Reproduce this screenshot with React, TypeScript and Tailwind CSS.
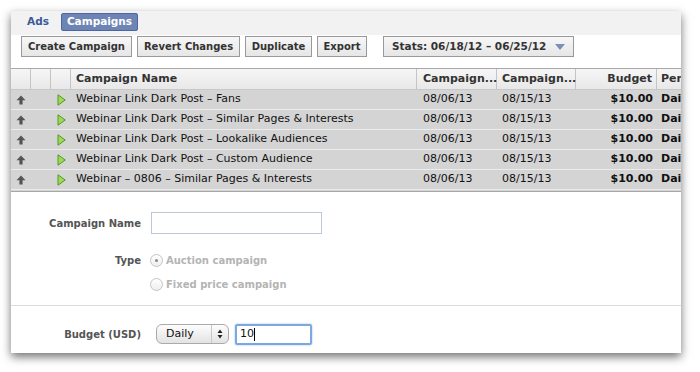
import React from 'react';

const rows = [
    'Webinar Link Dark Post – Fans',
    'Webinar Link Dark Post – Similar Pages & Interests',
    'Webinar Link Dark Post – Lookalike Audiences',
    'Webinar Link Dark Post – Custom Audience',
    'Webinar – 0806 – Similar Pages & Interests',
];

const UpArrow = () => (
    <svg width="10" height="10" viewBox="0 0 10 10">
        <path d="M5 0.5 L9.5 5.2 L6.6 5.2 L6.6 9.5 L3.4 9.5 L3.4 5.2 L0.5 5.2 Z" fill="#555" />
    </svg>
);

const PlayIcon = () => (
    <svg width="9" height="12" viewBox="0 0 9 12">
        <path d="M1 0.8 L8.2 6 L1 11.2 Z" fill="#9fd85a" stroke="#4e9a1e" strokeWidth="1" strokeLinejoin="round" />
    </svg>
);

const ToolButton: React.FC<{ children: React.ReactNode; className?: string }> = ({ children, className }) => (
    <button className={`h-[21px] px-[7px] border border-[#999] bg-gradient-to-b from-[#f7f7f7] to-[#e6e6e6] text-[10px] font-bold text-[#333] leading-none flex items-center whitespace-nowrap ${className ?? ''}`}>
        {children}
    </button>
);

const App: React.FC = () => {
    const cols = 'grid grid-cols-[20px_20px_20px_346px_80px_79px_81px_24px]';
    return (
        <div className="w-[700px] h-[372px] bg-white overflow-hidden font-['Lucida_Grande','DejaVu_Sans',sans-serif]">
            <div className="ml-[11px] mt-[11px] w-[670px] h-[342px] bg-white shadow-[0_4px_9px_rgba(0,0,0,0.55)] flex flex-col">
                {/* tabs */}
                <div className="h-[24px] bg-[#f2f2f2] flex items-start pt-[2px] pl-[16px]">
                    <span className="text-[10.5px] font-bold text-[#3b5998] h-[18px] flex items-center">Ads</span>
                    <span className="ml-[12px] h-[18px] px-[5px] flex items-center bg-[#6d84b4] border border-[#4b67a1] rounded-[2px] text-[10.5px] font-bold text-white">Campaigns</span>
                </div>
                {/* toolbar */}
                <div className="h-[33px] flex items-start pt-[1px] pl-[10px] gap-[5px]">
                    <ToolButton className="w-[111px] justify-center">Create Campaign</ToolButton>
                    <ToolButton className="w-[103px] justify-center">Revert Changes</ToolButton>
                    <ToolButton className="w-[67px] justify-center">Duplicate</ToolButton>
                    <ToolButton className="w-[50px] justify-center">Export</ToolButton>
                    <ToolButton className="ml-[11px] w-[191px] justify-between px-[8px]">
                        <span className="text-[10.5px]">Stats: 06/18/12 – 06/25/12</span>
                        <svg width="10" height="6" viewBox="0 0 10 6">
                            <path d="M0 0 L10 0 L5 6 Z" fill="#7d8fb8" />
                        </svg>
                    </ToolButton>
                </div>
                {/* table */}
                <div className="border-t border-[#a8a8a8]">
                    <div className={`${cols} h-[21px] bg-gradient-to-b from-[#f6f6f6] to-[#e8e8e8] border-b border-[#c8c8c8] text-[11px] font-bold text-[#333]`}>
                        <div className="border-r border-[#c4c4c4]" />
                        <div className="border-r border-[#c4c4c4]" />
                        <div className="border-r border-[#c4c4c4]" />
                        <div className="border-r border-[#c4c4c4] pl-[5px] flex items-center">Campaign Name</div>
                        <div className="border-r border-[#c4c4c4] pl-[6px] flex items-center">Campaign...</div>
                        <div className="border-r border-[#c4c4c4] pl-[5px] flex items-center">Campaign...</div>
                        <div className="border-r border-[#c4c4c4] pr-[4px] flex items-center justify-end">Budget</div>
                        <div className="pl-[4px] flex items-center overflow-hidden whitespace-nowrap">Per</div>
                    </div>
                    {rows.map((name, i) => (
                        <div key={i} className={`${cols} h-[20px] bg-[#d4d4d4] border-b border-[#ececec] text-[11px] text-[#111]`}>
                            <div className="flex items-center justify-center"><UpArrow /></div>
                            <div />
                            <div className="flex items-center justify-center"><PlayIcon /></div>
                            <div className="pl-[5px] flex items-center whitespace-nowrap">{name}</div>
                            <div className="pl-[6px] flex items-center">08/06/13</div>
                            <div className="pl-[5px] flex items-center">08/15/13</div>
                            <div className="pr-[4px] flex items-center justify-end font-bold">$10.00</div>
                            <div className="pl-[4px] flex items-center font-bold overflow-hidden whitespace-nowrap">Dai</div>
                        </div>
                    ))}
                    <div className="h-[2px] bg-[#d4d4d4] border-b border-[#a8a8a8]" />
                </div>
                {/* form */}
                <div className="flex flex-col text-[10px] font-bold">
                    <div className="flex items-center mt-[20px] h-[22px]">
                        <span className="w-[130px] text-right text-[#555]">Campaign Name</span>
                        <input className="ml-[10px] w-[171px] h-[22px] border border-[#bdc7d8] outline-none" />
                    </div>
                    <div className="flex items-center mt-[16px] h-[20px]">
                        <span className="w-[130px] text-right text-[#555]">Type</span>
                        <span className="ml-[9px] w-[13px] h-[13px] rounded-full border border-[#c4c4c4] bg-gradient-to-b from-white to-[#eee] flex items-center justify-center">
                            <span className="w-[3px] h-[3px] rounded-full bg-[#888]" />
                        </span>
                        <span className="ml-[3px] text-[#b4b4b4]">Auction campaign</span>
                    </div>
                    <div className="flex items-center mt-[4px] h-[20px]">
                        <span className="w-[130px]" />
                        <span className="ml-[9px] w-[13px] h-[13px] rounded-full border border-[#c4c4c4] bg-gradient-to-b from-white to-[#eee]" />
                        <span className="ml-[3px] text-[#b4b4b4]">Fixed price campaign</span>
                    </div>
                    <div className="mt-[11px] border-t border-[#dcdcdc]" />
                    <div className="flex items-center mt-[17px] h-[22px]">
                        <span className="w-[130px] text-right text-[#555]">Budget (USD)</span>
                        <div className="ml-[15px] w-[73px] h-[20px] rounded-[6px] border border-[#aaa] bg-gradient-to-b from-[#fdfdfd] to-[#e3e3e3] flex items-center font-normal text-[11px] text-[#111]">
                            <span className="flex-1 pl-[9px]">Daily</span>
                            <span className="w-[17px] h-full border-l border-[#c8c8c8] flex items-center justify-center">
                                <svg width="6" height="10" viewBox="0 0 6 10">
                                    <path d="M3 0.5 L5.5 4 L0.5 4 Z M3 9.5 L5.5 6 L0.5 6 Z" fill="#222" />
                                </svg>
                            </span>
                        </div>
                        <div className="ml-[6px] w-[77px] h-[21px] border-2 border-[#7ea7e0] rounded-[2px] shadow-[0_0_2px_#8fb4ea] flex items-center pl-[3px] font-normal text-[11px] text-[#111]">
                            10<span className="w-px h-[13px] bg-black" />
                        </div>
                    </div>
                </div>
            </div>
        </div>
    );
};

export default App;
